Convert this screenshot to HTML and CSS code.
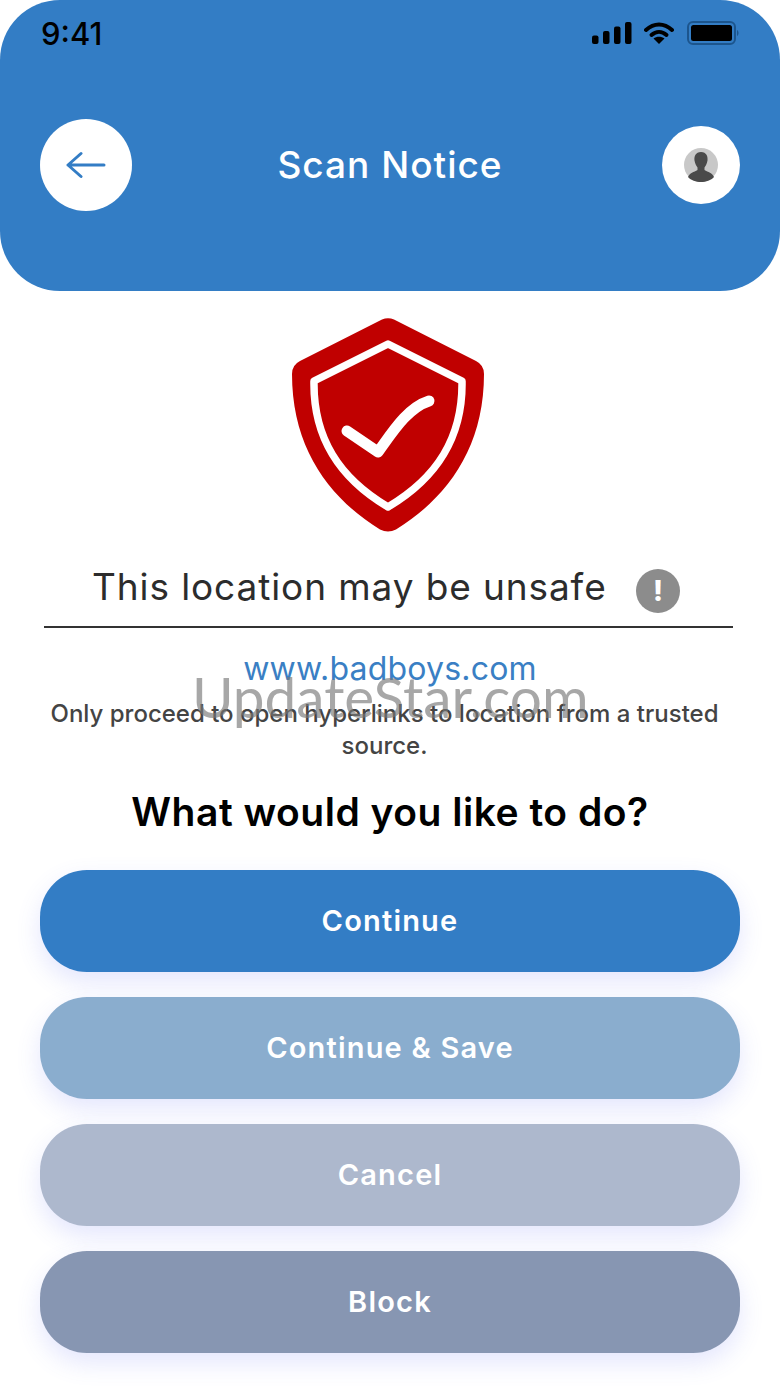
FILE: index.html
```html
<html>
	<head>
		<meta charset="utf-8"/>
		<title>Scan Notice</title>
		<link rel="stylesheet" href="styles.css">
	</head>
	<body>
		<div id="screen">
			<div id="header">
				<div id="status">
					<span id="clock">9:41</span>
					<div id="status_icons">
						<svg width="40" height="22" viewBox="0 0 40 22">
							<rect x="0" y="13.5" width="6.5" height="8.5" rx="2"/>
							<rect x="11" y="9" width="6.5" height="13" rx="2"/>
							<rect x="22" y="4.5" width="6.5" height="17.5" rx="2"/>
							<rect x="33" y="0" width="6.5" height="22" rx="2"/>
						</svg>
						<svg class="wifi_icon" width="30" height="22" viewBox="0 0 30 22">
							<path d="M2 8 C10 0.500 20 0.500 28 8" class="wifi"/>
							<path d="M7.500 13 C12 9 18 9 22.500 13" class="wifi"/>
							<path d="M15 22 L9.500 16.500 C12.500 14.200 17.500 14.200 20.500 16.500 Z"/>
						</svg>
						<svg width="53" height="24" viewBox="0 0 53 24">
							<rect x="1" y="1" width="47" height="22" rx="5" class="batt_border"/>
							<rect x="4" y="4" width="41" height="16" rx="2.500"/>
							<path d="M50 9 C52 10 52 14 50 15 Z" class="batt_nub"/>
						</svg>
					</div>
				</div>
				<div id="nav">
					<a class="back" href="#">
						<svg width="40" height="28" viewBox="0 0 40 28">
							<path d="M2 14 H38 M15 2.500 L2 14 L15 25.500"/>
						</svg>
					</a>
					<h1>Scan Notice</h1>
					<a class="profile" href="#">
						<svg width="36" height="36" viewBox="0 0 36 36">
							<circle cx="18" cy="18" r="17" fill="#c8c8c8"/>
							<path d="M18 5 C12.500 5 11 9.500 11.500 13.500 C12 17 13.500 19 14.500 20.500 L14.500 23 C11 25 6.500 26 5 30 C8 33.500 13 35 18 35 C23 35 28 33.500 31 30 C29.500 26 25 25 21.500 23 L21.500 20.500 C22.500 19 24 17 24.500 13.500 C25 9.500 23.500 5 18 5 Z" fill="#4a4a4a"/>
						</svg>
					</a>
				</div>
			</div>

			<div id="content">
				<svg class="shield" width="192" height="214" viewBox="0 0 192 214">
					<path d="M90 1.500 Q96 -1 102 1.500 L184 43 Q192 47 192 56 C192 130 155 180 104 211.500 Q96 215.500 88 211.500 C37 180 0 130 0 56 Q0 47 8 43 Z" fill="#c00000"/>
					<path d="M96 26 L170 63 C171 120 145 160 96 189 C47 160 21 120 22 63 Z" class="shield_line"/>
					<path d="M55 113 L86 134 C100 115 115 90 137 83" class="shield_check"/>
				</svg>

				<div id="warning">
					<h2>This location may be unsafe</h2>
					<span class="info">!</span>
				</div>
				<a id="site" href="#">www.badboys.com</a>
				<p id="advice">Only proceed to open hyperlinks to location from a trusted source.</p>
				<h3>What would you like to do?</h3>

				<div id="actions">
					<button class="action continue">Continue</button>
					<button class="action save">Continue &amp; Save</button>
					<button class="action cancel">Cancel</button>
					<button class="action block">Block</button>
				</div>
			</div>

			<div id="watermark">UpdateStar.com</div>
		</div>
	</body>
</html>
```

FILE: styles.css
```css
html, body {
	margin: 0;
	padding: 0;
	background: #fff;
}
body {
	font-family: "Inter", "Noto Sans", sans-serif;
}
#screen {
	position: relative;
	width: 780px;
	height: 1387px;
	overflow: hidden;
}
#header {
	height: 291px;
	background: #337dc5;
	border-radius: 60px;
	padding: 19px 40px 0 40px;
	box-sizing: border-box;
}
#status {
	display: flex;
	justify-content: space-between;
	align-items: center;
	height: 28px;
}
#clock {
	margin-left: 1px;
	font-size: 31px;
	font-weight: 500;
	color: #000;
}
#status_icons {
	display: flex;
	align-items: center;
	gap: 12px;
}
.wifi_icon {
	margin-right: 1px;
}
.wifi {
	fill: none;
	stroke: #000;
	stroke-width: 4;
	stroke-linecap: round;
}
.batt_border {
	fill: none;
	stroke: #1c558d;
	stroke-width: 2;
}
.batt_nub {
	fill: #1c558d;
}
#nav {
	display: grid;
	grid-template-columns: 1fr auto 1fr;
	align-items: center;
	height: 92px;
	margin-top: 72px;
}
#nav h1 {
	margin: 0 0 2px;
	font-size: 37px;
	font-weight: 500;
	letter-spacing: 1px;
	color: #fff;
}
.back {
	width: 92px;
	height: 92px;
	border-radius: 50%;
	background: #fff;
	display: flex;
	align-items: center;
	justify-content: center;
}
.back svg {
	fill: none;
	stroke: #337dc5;
	stroke-width: 3;
	stroke-linecap: round;
	stroke-linejoin: round;
}
.profile {
	justify-self: end;
	width: 78px;
	height: 78px;
	border-radius: 50%;
	background: #fff;
	display: flex;
	align-items: center;
	justify-content: center;
}
#content {
	display: flex;
	flex-direction: column;
	align-items: center;
	padding: 27px 40px 0;
}
.shield {
	display: block;
	margin-left: -4px;
}
.shield_line {
	fill: none;
	stroke: #fff;
	stroke-width: 7.500;
	stroke-linejoin: round;
}
.shield_check {
	fill: none;
	stroke: #fff;
	stroke-width: 11;
	stroke-linecap: round;
	stroke-linejoin: round;
}
#warning {
	width: 689px;
	height: 94px;
	margin-left: -3px;
	border-bottom: 2px solid #333;
	display: flex;
	align-items: center;
	margin-bottom: 23px;
}
#warning h2 {
	margin: 14px 0 0 48px;
	font-size: 37px;
	font-weight: 400;
	letter-spacing: 0.9px;
	color: #2c2c2c;
	white-space: nowrap;
}
.info {
	position: absolute;
	left: 636px;
	top: 569px;
	width: 44px;
	height: 44px;
	border-radius: 50%;
	background: #8c8c8c;
	color: #fff;
	font-size: 28px;
	font-weight: 800;
	text-align: center;
	line-height: 44px;
}
#site {
	font-size: 32px;
	letter-spacing: 0.2px;
	line-height: 36px;
	color: #3a7fc4;
	text-decoration: none;
}
#advice {
	margin: 11px 0 0;
	width: 700px;
	padding-right: 11px;
	box-sizing: border-box;
	text-align: center;
	font-size: 24px;
	font-weight: 500;
	line-height: 32px;
	color: #444;
}
h3 {
	margin: 25px 0 0;
	font-size: 39px;
	letter-spacing: 0.5px;
	line-height: 50px;
	font-weight: 600;
	color: #000;
	white-space: nowrap;
}
#actions {
	display: flex;
	flex-direction: column;
	gap: 25px;
	width: 700px;
	margin-top: 33px;
}
.action {
	height: 102px;
	padding: 0 0 2px;
	border: 0;
	border-radius: 47px;
	color: #fff;
	font-family: inherit;
	font-size: 29px;
	font-weight: 600;
	letter-spacing: 1.2px;
	box-shadow: 0 10px 24px rgba(90, 100, 240, 0.16);
}
.continue {
	background: #337dc5;
}
.save {
	background: #8aadce;
}
.cancel {
	background: #adb8cd;
}
.block {
	background: #8796b2;
}
#watermark {
	position: absolute;
	left: 192px;
	top: 661px;
	font-family: "Lato", sans-serif;
	font-size: 56.700px;
	font-weight: 400;
	line-height: 70px;
	color: rgba(120, 120, 120, 0.65);
	white-space: nowrap;
}
```
